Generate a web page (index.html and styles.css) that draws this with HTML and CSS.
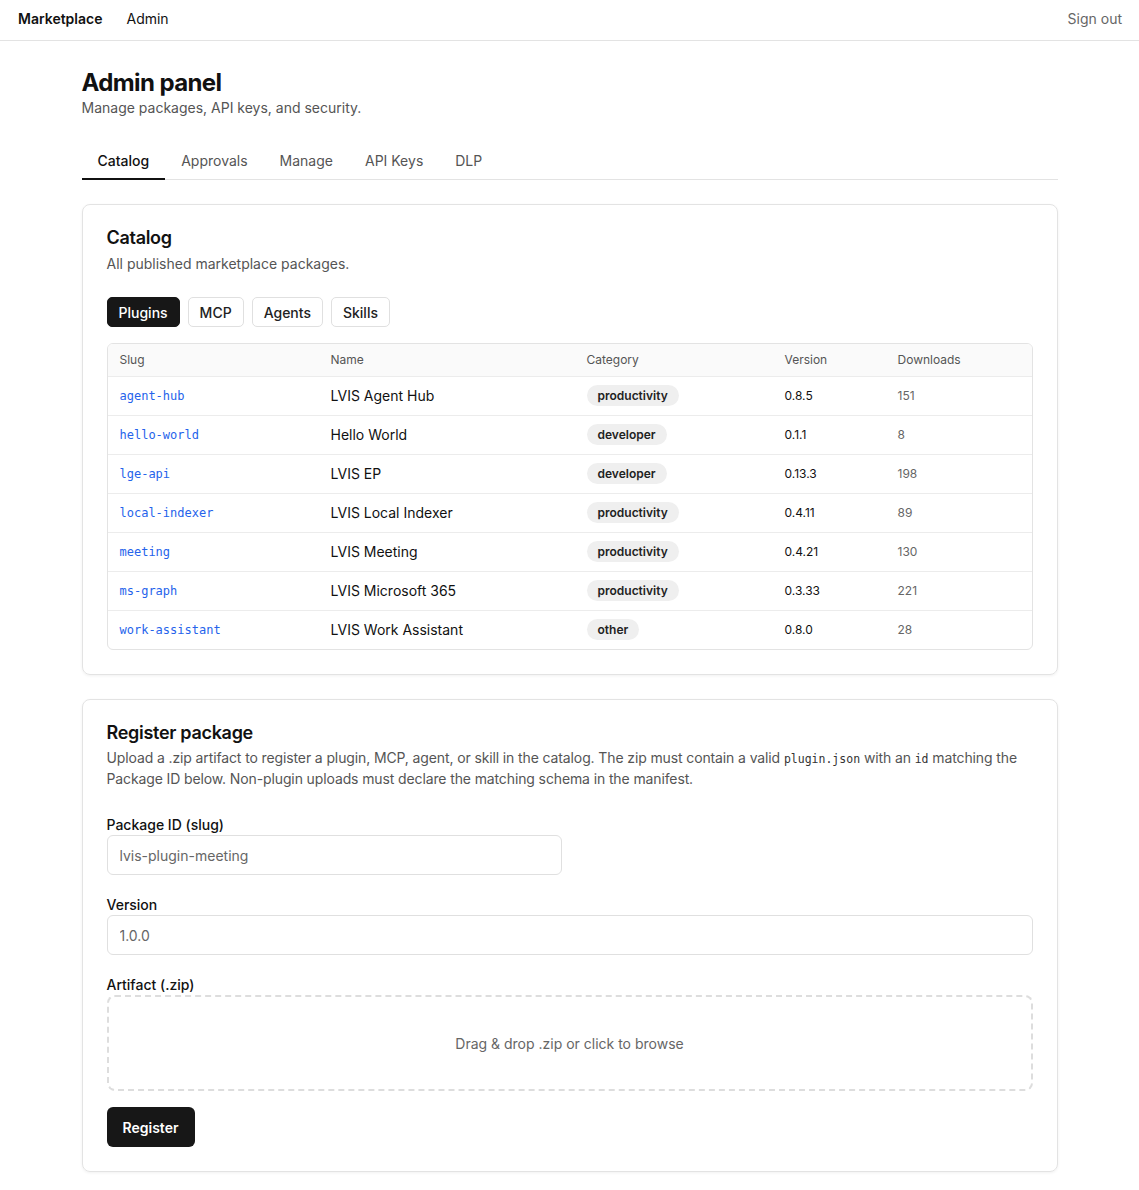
FILE: index.html
```html
<!DOCTYPE html>
<html lang="en">
<head>
    <meta charset="UTF-8">
    <title>Admin panel</title>
    <link rel="stylesheet" href="styles.css">
</head>
<body>
    <header class="topbar">
        <nav class="topnav">
            <a class="brand" href="#">Marketplace</a>
            <a class="navlink" href="#">Admin</a>
        </nav>
        <a class="signout" href="#">Sign out</a>
    </header>

    <main class="page">
        <h1 class="page-title">Admin panel</h1>
        <p class="page-sub">Manage packages, API keys, and security.</p>

        <div class="tabs">
            <button class="tab active">Catalog</button>
            <button class="tab">Approvals</button>
            <button class="tab">Manage</button>
            <button class="tab">API Keys</button>
            <button class="tab">DLP</button>
        </div>

        <section class="card">
            <h2 class="card-title">Catalog</h2>
            <p class="card-sub">All published marketplace packages.</p>

            <div class="kinds">
                <button class="kind active">Plugins</button>
                <button class="kind">MCP</button>
                <button class="kind">Agents</button>
                <button class="kind">Skills</button>
            </div>

            <div class="table-wrap">
                <table class="catalog">
                    <thead>
                        <tr>
                            <th class="c-slug">Slug</th>
                            <th class="c-name">Name</th>
                            <th class="c-cat">Category</th>
                            <th class="c-ver">Version</th>
                            <th>Downloads</th>
                        </tr>
                    </thead>
                    <tbody>
                        <tr><td><a class="slug" href="#">agent-hub</a></td><td class="name">LVIS Agent Hub</td><td><span class="badge">productivity</span></td><td class="ver">0.8.5</td><td class="dl">151</td></tr>
                        <tr><td><a class="slug" href="#">hello-world</a></td><td class="name">Hello World</td><td><span class="badge">developer</span></td><td class="ver">0.1.1</td><td class="dl">8</td></tr>
                        <tr><td><a class="slug" href="#">lge-api</a></td><td class="name">LVIS EP</td><td><span class="badge">developer</span></td><td class="ver">0.13.3</td><td class="dl">198</td></tr>
                        <tr><td><a class="slug" href="#">local-indexer</a></td><td class="name">LVIS Local Indexer</td><td><span class="badge">productivity</span></td><td class="ver">0.4.11</td><td class="dl">89</td></tr>
                        <tr><td><a class="slug" href="#">meeting</a></td><td class="name">LVIS Meeting</td><td><span class="badge">productivity</span></td><td class="ver">0.4.21</td><td class="dl">130</td></tr>
                        <tr><td><a class="slug" href="#">ms-graph</a></td><td class="name">LVIS Microsoft 365</td><td><span class="badge">productivity</span></td><td class="ver">0.3.33</td><td class="dl">221</td></tr>
                        <tr><td><a class="slug" href="#">work-assistant</a></td><td class="name">LVIS Work Assistant</td><td><span class="badge">other</span></td><td class="ver">0.8.0</td><td class="dl">28</td></tr>
                    </tbody>
                </table>
            </div>
        </section>

        <section class="card">
            <h2 class="card-title">Register package</h2>
            <p class="card-desc">Upload a .zip artifact to register a plugin, MCP, agent, or skill in the catalog. The zip must contain a valid <code>plugin.json</code> with an <code>id</code> matching the Package ID below. Non-plugin uploads must declare the matching schema in the manifest.</p>

            <form class="reg-form">
                <label class="field">
                    <span class="label">Package ID (slug)</span>
                    <input class="input half" type="text" placeholder="lvis-plugin-meeting">
                </label>
                <label class="field">
                    <span class="label">Version</span>
                    <input class="input" type="text" placeholder="1.0.0">
                </label>
                <div class="field">
                    <span class="label">Artifact (.zip)</span>
                    <div class="dropzone">Drag &amp; drop .zip or click to browse</div>
                </div>
                <div class="actions">
                    <button class="primary" type="button">Register</button>
                </div>
            </form>
        </section>
    </main>
</body>
</html>
```

FILE: styles.css
```css
* {
    box-sizing: border-box;
}
body {
    margin: 0;
    font-family: Inter, "Noto Sans", "Liberation Sans", sans-serif;
    color: #111;
    background: #fff;
    font-size: 14px;
}
a {
    text-decoration: none;
    color: inherit;
}
button {
    font-family: inherit;
}

/* top bar */
.topbar {
    height: 41px;
    border-bottom: 1px solid #e3e3e3;
    display: flex;
    align-items: center;
    justify-content: space-between;
    padding: 0 17px 4px 18px;
}
.topnav {
    display: flex;
    gap: 24px;
}
.brand {
    font-weight: 600;
    color: #111;
}
.navlink {
    color: #111;
}
.signout {
    color: #666;
}

/* page */
.page {
    width: 976px;
    margin: 0 auto;
    padding: 28px 0 18px;
}
.page-title {
    font-size: 24px;
    font-weight: 700;
    letter-spacing: -0.6px;
    margin: 0;
    line-height: 28px;
}
.page-sub {
    margin: 2px 0 0;
    color: #555;
    line-height: 17px;
}

.tabs {
    display: flex;
    border-bottom: 1px solid #e3e3e3;
    margin-top: 27px;
    margin-bottom: 24px;
}
.tab {
    background: none;
    border: none;
    border-bottom: 2px solid transparent;
    margin-bottom: -1px;
    padding: 9px 16px 9px;
    font-size: 14px;
    color: #555;
    cursor: pointer;
}
.tab.active {
    color: #111;
    font-weight: 500;
    border-bottom-color: #111;
}

/* cards */
.card {
    border: 1px solid #e3e3e3;
    border-radius: 8px;
    padding: 24px;
    margin-bottom: 24px;
    box-shadow: 0 1px 3px rgba(0, 0, 0, 0.06);
}
.card-title {
    font-size: 18px;
    font-weight: 600;
    letter-spacing: -0.3px;
    margin: 0;
    line-height: 18px;
}
.card-sub {
    margin: 8px 0 0;
    color: #555;
    line-height: 18px;
}
.card-desc {
    margin: 6px 0 0;
    color: #555;
    line-height: 20px;
    letter-spacing: -0.12px;
}
.card-desc code {
    font-family: "DejaVu Sans Mono", "Liberation Mono", monospace;
    font-size: 11.5px;
    letter-spacing: 0;
    color: #333;
}

.kinds {
    display: flex;
    gap: 8px;
    margin-top: 24px;
    margin-bottom: 16px;
}
.kind {
    height: 30px;
    padding: 0 11px;
    border: 1px solid #e0e0e0;
    border-radius: 5px;
    background: #fff;
    color: #222;
    font-size: 14px;
    font-weight: 500;
    cursor: pointer;
}
.kind.active {
    background: #171717;
    border-color: #171717;
    color: #fff;
}

/* catalog table */
.table-wrap {
    border: 1px solid #e3e3e3;
    border-radius: 6px;
    overflow: hidden;
}
.catalog {
    width: 100%;
    border-collapse: collapse;
}
.catalog th {
    background: #fafafa;
    text-align: left;
    font-weight: 400;
    font-size: 12px;
    color: #555;
    height: 32px;
    padding: 0 12px;
}
.catalog td {
    height: 39px;
    padding: 0 12px;
    border-top: 1px solid #ececec;
    font-size: 12px;
}
.c-slug { width: 211px; }
.c-name { width: 256px; }
.c-cat { width: 198px; }
.c-ver { width: 113px; }
.slug {
    font-family: "DejaVu Sans Mono", "Liberation Mono", monospace;
    font-size: 12px;
    color: #2563eb;
}
.catalog td.name {
    font-size: 14px;
    color: #111;
}
.badge {
    display: inline-block;
    background: #efefef;
    border-radius: 999px;
    padding: 3px 11px;
    font-size: 12px;
    font-weight: 600;
    color: #222;
}
.ver {
    color: #111;
}
.catalog td.dl {
    color: #666;
}

/* register form */
.reg-form {
    margin-top: 28px;
    display: flex;
    flex-direction: column;
    gap: 22px;
}
.field {
    display: flex;
    flex-direction: column;
    gap: 2px;
}
.label {
    font-weight: 500;
    color: #111;
    line-height: 16px;
}
.input {
    height: 40px;
    border: 1px solid #e0e0e0;
    border-radius: 6px;
    padding: 0 12px;
    font-family: inherit;
    font-size: 14px;
    color: #111;
}
.input::placeholder {
    color: #666;
}
.input.half {
    width: 455px;
}
.dropzone {
    height: 96px;
    border: 2px dashed #ddd;
    border-radius: 8px;
    display: flex;
    align-items: center;
    justify-content: center;
    color: #666;
}
.actions {
    margin-top: -6px;
}
.primary {
    height: 40px;
    padding: 0 16px;
    border: none;
    border-radius: 6px;
    background: #171717;
    color: #fff;
    font-size: 14px;
    font-weight: 600;
    cursor: pointer;
}
```
